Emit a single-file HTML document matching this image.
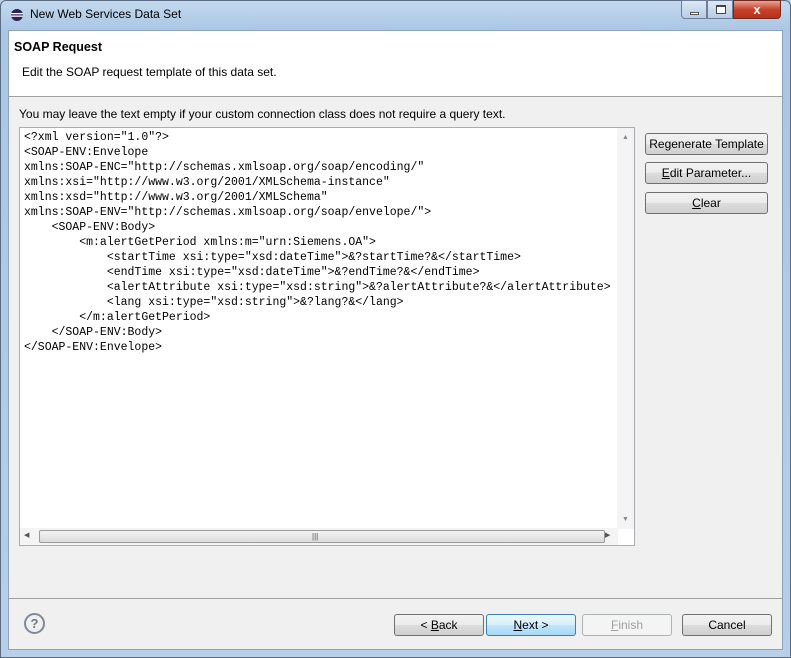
<!DOCTYPE html>
<html><head><style>
*{margin:0;padding:0;box-sizing:border-box}
body{width:791px;height:658px;overflow:hidden;background:#b9d1ea;font-family:"Liberation Sans",sans-serif;font-size:12px;color:#000;position:relative}
.frame{position:absolute;left:0;top:0;width:791px;height:658px;background:linear-gradient(180deg,#c4d9ee 0,#a9c6e4 30px,#b7cfe8 100%);border:1px solid #5a6c84;border-radius:6px 6px 0 0}
.title{position:absolute;left:30px;top:7px;font-size:12px;color:#000}
.client{position:absolute;left:8px;top:30px;width:775px;height:620px;background:#f0f0f0;border:1px solid #8da2bd}
.hdr{position:absolute;left:0;top:0;width:773px;height:66px;background:#fff;border-bottom:1px solid #a0a0a0}
.abs{position:absolute}
.ta{position:absolute;left:10px;top:96px;width:616px;height:419px;background:#fff;border:1px solid #abadb3}
pre{position:absolute;left:4px;top:2px;font-family:"Liberation Mono",monospace;font-size:11.5px;line-height:15px;color:#000}
.vs{position:absolute;right:0;top:0;width:17px;height:401px;background:#f4f4f4}
.hs{position:absolute;left:0;bottom:0;width:598px;height:17px;background:#f4f4f4}
.thumb{position:absolute;left:19px;top:2px;width:566px;height:13px;border:1px solid #9a9a9a;border-radius:2px;background:linear-gradient(#f3f3f3,#dcdcdc)}
.btn{position:absolute;height:22px;border:1px solid #707070;border-radius:3px;background:linear-gradient(#f2f2f2 0,#ebebeb 50%,#dddddd 51%,#cfcfcf 100%);text-align:center;line-height:20px;font-size:12px}
.btn.def{border-color:#3c7fb1;background:linear-gradient(#eaf6fd 0,#d9f0fc 50%,#bee6fd 51%,#a7d9f5 100%)}
.btn.dis{border-color:#adb2b5;background:#f4f4f4;color:#a0a0a0}
u{text-decoration:underline}
</style></head><body>
<div class="frame"></div>
<svg class="abs" style="left:10px;top:8px" width="14" height="14"><circle cx="7" cy="7" r="6" fill="#2c2255"/><rect x="1" y="5" width="12" height="1.3" fill="#fff"/><rect x="1" y="7.5" width="12" height="1.3" fill="#fff"/></svg>
<div class="title">New Web Services Data Set</div>
<div class="abs" style="left:681px;top:0;width:26px;height:19px;border:1px solid #6d7f98;border-radius:0 0 0 4px;background:linear-gradient(#dde8f4,#b8cce4)"><div class="abs" style="left:8px;top:11px;width:9px;height:3px;border:1px solid #555;background:#fff"></div></div>
<div class="abs" style="left:707px;top:0;width:26px;height:19px;border:1px solid #6d7f98;background:linear-gradient(#dde8f4,#b8cce4)"><div class="abs" style="left:8px;top:4px;width:10px;height:9px;border:1px solid #444;border-top-width:2px;background:#fff"></div></div>
<div class="abs" style="left:733px;top:0;width:48px;height:19px;border:1px solid #6e2a22;border-radius:0 0 4px 0;background:linear-gradient(#e8a393,#c7422c 50%,#b7301a);color:#fff;font-weight:bold;text-align:center;line-height:17px;font-size:13px">x</div>
<div class="client">
 <div class="hdr">
  <div class="abs" style="left:5px;top:9px;font-weight:bold;font-size:12.5px">SOAP Request</div>
  <div class="abs" style="left:13px;top:34px">Edit the SOAP request template of this data set.</div>
 </div>
 <div class="abs" style="left:10px;top:76px">You may leave the text empty if your custom connection class does not require a query text.</div>
 <div class="ta">
<pre>&lt;?xml version="1.0"?&gt;
&lt;SOAP-ENV:Envelope
xmlns:SOAP-ENC="http://schemas.xmlsoap.org/soap/encoding/"
xmlns:xsi="http://www.w3.org/2001/XMLSchema-instance"
xmlns:xsd="http://www.w3.org/2001/XMLSchema"
xmlns:SOAP-ENV="http://schemas.xmlsoap.org/soap/envelope/"&gt;
    &lt;SOAP-ENV:Body&gt;
        &lt;m:alertGetPeriod xmlns:m="urn:Siemens.OA"&gt;
            &lt;startTime xsi:type="xsd:dateTime"&gt;&amp;?startTime?&amp;&lt;/startTime&gt;
            &lt;endTime xsi:type="xsd:dateTime"&gt;&amp;?endTime?&amp;&lt;/endTime&gt;
            &lt;alertAttribute xsi:type="xsd:string"&gt;&amp;?alertAttribute?&amp;&lt;/alertAttribute&gt;
            &lt;lang xsi:type="xsd:string"&gt;&amp;?lang?&amp;&lt;/lang&gt;
        &lt;/m:alertGetPeriod&gt;
    &lt;/SOAP-ENV:Body&gt;
&lt;/SOAP-ENV:Envelope&gt;</pre>
  <div class="vs"><div class="abs" style="left:5px;top:6px;font-size:7px;color:#888">▲</div><div class="abs" style="left:5px;bottom:6px;font-size:7px;color:#888">▼</div></div>
  <div class="hs"><div class="abs" style="left:4px;top:3px;font-size:7px;color:#555">◀</div><div class="thumb"><div class="abs" style="left:272px;top:1px;font-size:8px;color:#555">|||</div></div><div class="abs" style="left:585px;top:3px;font-size:7px;color:#555">▶</div></div>
 </div>
 <div class="btn" style="left:636px;top:102px;width:123px">Regenerate Template</div>
 <div class="btn" style="left:636px;top:131px;width:123px"><u>E</u>dit Parameter...</div>
 <div class="btn" style="left:636px;top:161px;width:123px"><u>C</u>lear</div>
 <div class="abs" style="left:0;top:567px;width:773px;height:1px;background:#a0a0a0"></div>
 <div class="abs" style="left:15px;top:582px;width:21px;height:21px;border:2px solid #7d8a9a;border-radius:50%;text-align:center;line-height:17px;font-weight:bold;color:#6b7888;font-size:13px">?</div>
 <div class="btn" style="left:385px;top:583px;width:90px">&lt; <u>B</u>ack</div>
 <div class="btn def" style="left:477px;top:583px;width:90px"><u>N</u>ext &gt;</div>
 <div class="btn dis" style="left:573px;top:583px;width:90px"><u>F</u>inish</div>
 <div class="btn" style="left:673px;top:583px;width:90px">Cancel</div>
</div>
</body></html>
